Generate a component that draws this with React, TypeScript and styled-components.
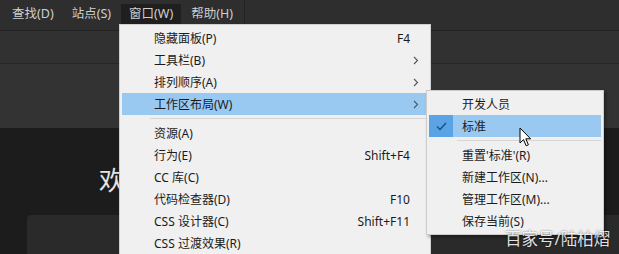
import styled, { createGlobalStyle } from "styled-components";

const GlobalStyle = createGlobalStyle`
  html, body {
    margin: 0;
    padding: 0;
    background: #1c1c1c;
  }
  * {
    box-sizing: border-box;
  }
`;

const uiFont = `"Noto Sans", "Noto Sans CJK SC", sans-serif`;

type Entry =
  | { kind: "item"; label: string; shortcut?: string; sub?: boolean; active?: boolean }
  | { kind: "sep" };

const windowMenu: Entry[] = [
  { kind: "item", label: "隐藏面板(P)", shortcut: "F4" },
  { kind: "item", label: "工具栏(B)", sub: true },
  { kind: "item", label: "排列顺序(A)", sub: true },
  { kind: "item", label: "工作区布局(W)", sub: true, active: true },
  { kind: "sep" },
  { kind: "item", label: "资源(A)" },
  { kind: "item", label: "行为(E)", shortcut: "Shift+F4" },
  { kind: "item", label: "CC 库(C)" },
  { kind: "item", label: "代码检查器(D)", shortcut: "F10" },
  { kind: "item", label: "CSS 设计器(C)", shortcut: "Shift+F11" },
  { kind: "item", label: "CSS 过渡效果(R)" },
];

const layoutMenu: { label: string; checked?: boolean; sepBefore?: boolean }[] = [
  { label: "开发人员" },
  { label: "标准", checked: true },
  { label: "重置'标准'(R)", sepBefore: true },
  { label: "新建工作区(N)..." },
  { label: "管理工作区(M)..." },
  { label: "保存当前(S)" },
];

export default function App() {
  return (
    <>
      <GlobalStyle />
      <Screen>
        <MenuBar>
          <BarItem>查找(D)</BarItem>
          <BarItem>站点(S)</BarItem>
          <BarItem $open>窗口(W)</BarItem>
          <BarItem>帮助(H)</BarItem>
          <BarDivider />
        </MenuBar>
        <Toolbar />
        <Panel />
        <Content>
          <Welcome>欢迎</Welcome>
          <Card />
        </Content>

        <Dropdown>
          {windowMenu.map((e, i) =>
            e.kind === "sep" ? (
              <Separator key={i} />
            ) : (
              <MenuItem key={i} $active={e.active}>
                <span>{e.label}</span>
                {e.shortcut && <Shortcut>{e.shortcut}</Shortcut>}
                {e.sub && (
                  <Chevron width="6" height="9" viewBox="0 0 6 9">
                    <polyline points="1,1 4.5,4.5 1,8" fill="none" stroke="#555" strokeWidth="1.1" />
                  </Chevron>
                )}
              </MenuItem>
            )
          )}
        </Dropdown>

        <SubMenu>
          {layoutMenu.map((e, i) => (
            <div key={i}>
              {e.sepBefore && <Separator />}
              <SubItem $active={e.checked}>
                <CheckCell $on={e.checked}>
                  {e.checked && (
                    <svg width="11" height="9" viewBox="0 0 11 9">
                      <polyline points="1,4.5 4,7.5 10,1" fill="none" stroke="#1d4f80" strokeWidth="1.4" />
                    </svg>
                  )}
                </CheckCell>
                {e.label}
              </SubItem>
            </div>
          ))}
        </SubMenu>

        <Cursor width="14" height="21" viewBox="0 0 14 21">
          <path
            d="M1 1 L1 16 L4.5 12.6 L7.2 18.8 L9.4 17.8 L6.8 11.8 L11.6 11.8 Z"
            fill="#fff"
            stroke="#000"
            strokeWidth="1"
            strokeLinejoin="round"
          />
        </Cursor>

        <Watermark>百家号/陆柏熠</Watermark>
      </Screen>
    </>
  );
}

//style
const Screen = styled.div`
  position: relative;
  width: 619px;
  height: 254px;
  overflow: hidden;
  background: #1c1c1c;
  font-family: ${uiFont};
  display: flex;
  flex-direction: column;
`;

const MenuBar = styled.div`
  height: 31px;
  flex-shrink: 0;
  display: flex;
  align-items: flex-start;
  padding: 4px 0 0 4px;
  background: #2e2e2e;
  border-bottom: 1px solid #232323;
`;

const BarItem = styled.div<{ $open?: boolean }>`
  height: 20px;
  line-height: 20px;
  padding: 0 8px;
  margin-right: 2px;
  font-size: 12.5px;
  color: #cfcfcf;
  background: ${(p) => (p.$open ? "#1f1f1f" : "transparent")};
`;

const BarDivider = styled.div`
  width: 1px;
  height: 27px;
  margin-top: -4px;
  margin-left: 1px;
  background: #222;
`;

const Toolbar = styled.div`
  height: 33px;
  flex-shrink: 0;
  background: #313131;
  border-bottom: 1px solid #262626;
`;

const Panel = styled.div`
  height: 64px;
  flex-shrink: 0;
  background: #333333;
`;

const Content = styled.div`
  flex: 1;
  display: flex;
  flex-direction: column;
  padding: 37px 0 0 27px;
`;

const Welcome = styled.div`
  margin-left: 72px;
  width: 20px;
  overflow: hidden;
  font-size: 26px;
  line-height: 30px;
  color: #e4e4e4;
  white-space: nowrap;
`;

const Card = styled.div`
  margin-top: 20px;
  height: 60px;
  margin-right: -20px;
  border-radius: 4px;
  background: #2a2a2a;
`;

const Dropdown = styled.div`
  position: absolute;
  left: 119px;
  top: 24px;
  width: 312px;
  padding: 2px 2px;
  background: #f0f0f0;
  border: 1px solid #cfcfcf;
  border-bottom: none;
`;

const MenuItem = styled.div<{ $active?: boolean }>`
  height: 22px;
  display: flex;
  align-items: center;
  padding: 0 9px 0 32px;
  font-size: 12px;
  color: #1b1b1b;
  background: ${(p) => (p.$active ? "#99c9f1" : "transparent")};
  white-space: nowrap;
  & > span:first-child {
    flex: 1;
  }
`;

const Shortcut = styled.span`
  margin-right: 9px;
`;

const Chevron = styled.svg`
  display: block;
`;

const Separator = styled.div`
  height: 7px;
  margin-left: 28px;
  display: flex;
  align-items: center;
  &::after {
    content: "";
    flex: 1;
    height: 1px;
    background: #d5d5d5;
  }
`;

const SubMenu = styled.div`
  position: absolute;
  left: 426px;
  top: 90px;
  width: 178px;
  padding: 2px 2px;
  background: #f0f0f0;
  border: 1px solid #cccccc;
  box-shadow: 2px 2px 3px rgba(0, 0, 0, 0.35);
`;

const SubItem = styled.div<{ $active?: boolean }>`
  height: 22px;
  display: flex;
  align-items: center;
  font-size: 12px;
  color: #1b1b1b;
  white-space: nowrap;
  background: ${(p) => (p.$active ? "#99c9f1" : "transparent")};
`;

const CheckCell = styled.div<{ $on?: boolean }>`
  width: 24px;
  height: 22px;
  margin-right: 9px;
  display: flex;
  align-items: center;
  justify-content: center;
  background: ${(p) => (p.$on ? "#5aa3e4" : "transparent")};
`;

const Cursor = styled.svg`
  position: absolute;
  left: 519px;
  top: 127px;
`;

const Watermark = styled.div`
  position: absolute;
  left: 505px;
  top: 226px;
  font-size: 16.5px;
  color: rgba(255, 255, 255, 0.88);
  text-shadow: 0 0 2px rgba(0, 0, 0, 0.6);
  white-space: nowrap;
`;
